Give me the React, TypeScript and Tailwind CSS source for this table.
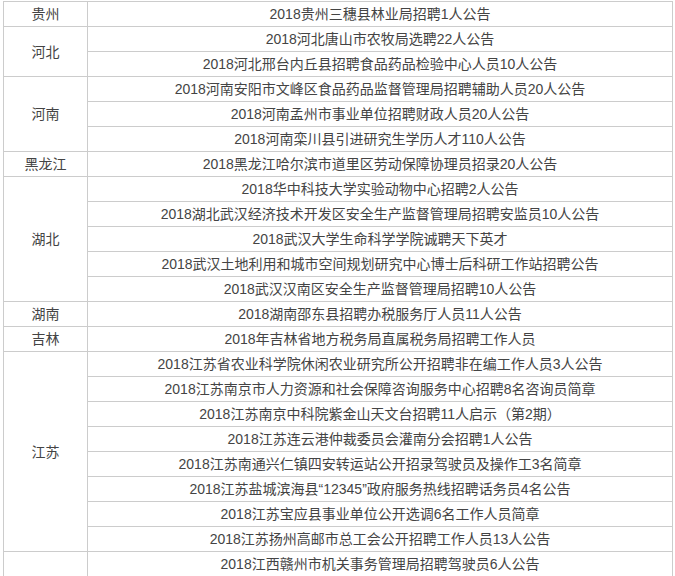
const groups: { province: string; items: string[] }[] = [
  { province: '贵州', items: ['2018贵州三穗县林业局招聘1人公告'] },
  { province: '河北', items: ['2018河北唐山市农牧局选聘22人公告', '2018河北邢台内丘县招聘食品药品检验中心人员10人公告'] },
  {
    province: '河南',
    items: [
      '2018河南安阳市文峰区食品药品监督管理局招聘辅助人员20人公告',
      '2018河南孟州市事业单位招聘财政人员20人公告',
      '2018河南栾川县引进研究生学历人才110人公告',
    ],
  },
  { province: '黑龙江', items: ['2018黑龙江哈尔滨市道里区劳动保障协理员招录20人公告'] },
  {
    province: '湖北',
    items: [
      '2018华中科技大学实验动物中心招聘2人公告',
      '2018湖北武汉经济技术开发区安全生产监督管理局招聘安监员10人公告',
      '2018武汉大学生命科学学院诚聘天下英才',
      '2018武汉土地利用和城市空间规划研究中心博士后科研工作站招聘公告',
      '2018武汉汉南区安全生产监督管理局招聘10人公告',
    ],
  },
  { province: '湖南', items: ['2018湖南邵东县招聘办税服务厅人员11人公告'] },
  { province: '吉林', items: ['2018年吉林省地方税务局直属税务局招聘工作人员'] },
  {
    province: '江苏',
    items: [
      '2018江苏省农业科学院休闲农业研究所公开招聘非在编工作人员3人公告',
      '2018江苏南京市人力资源和社会保障咨询服务中心招聘8名咨询员简章',
      '2018江苏南京中科院紫金山天文台招聘11人启示（第2期）',
      '2018江苏连云港仲裁委员会灌南分会招聘1人公告',
      '2018江苏南通兴仁镇四安转运站公开招录驾驶员及操作工3名简章',
      '2018江苏盐城滨海县“12345”政府服务热线招聘话务员4名公告',
      '2018江苏宝应县事业单位公开选调6名工作人员简章',
      '2018江苏扬州高邮市总工会公开招聘工作人员13人公告',
    ],
  },
  // 江西 continues below the visible area
  { province: '江西', items: ['2018江西赣州市机关事务管理局招聘驾驶员6人公告', '', ''] },
]

const cell = 'border border-[#cccccc] h-[25px] p-0 text-center align-middle leading-[24px]'

export default function App() {
  return (
    <div className="bg-white min-h-screen pt-px pl-[3px]">
      <table
        className="w-[670px] border-collapse table-fixed text-[14px] text-[#444444]"
        style={{ fontFamily: '"Liberation Sans", "Noto Sans CJK SC", sans-serif' }}
      >
        <colgroup>
          <col className="w-[84px]" />
          <col />
        </colgroup>
        <tbody>
          {groups.map((g) =>
            g.items.map((item, i) => (
              <tr key={g.province + i}>
                {i === 0 && (
                  <td rowSpan={g.items.length} className={cell}>
                    {g.province === '江西' ? '' : g.province}
                  </td>
                )}
                <td className={cell + ' whitespace-nowrap'}>{item}</td>
              </tr>
            ))
          )}
        </tbody>
      </table>
    </div>
  )
}
